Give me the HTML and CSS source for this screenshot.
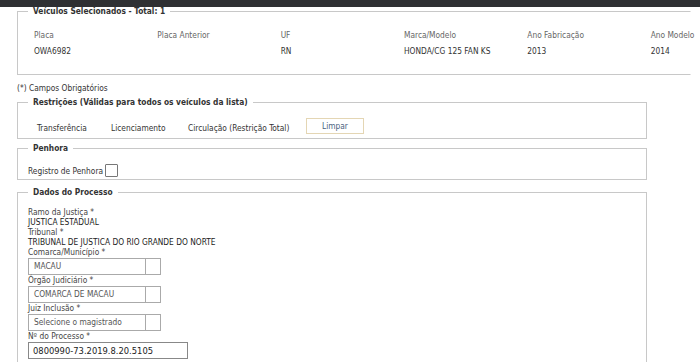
FILE: index.html
```html
<!DOCTYPE html>
<html lang="pt-BR">
<head>
  <meta charset="UTF-8" />
  <title>Restrição de Veículos</title>
  <link rel="stylesheet" href="styles.css">
</head>
<body>

  <div class="topbar"></div>

  <div class="page">
    <fieldset class="box box-wide">
      <legend>Veículos Selecionados - Total: 1</legend>
      <table class="veiculos">
        <tr class="head">
          <td>Placa</td>
          <td>Placa Anterior</td>
          <td>UF</td>
          <td>Marca/Modelo</td>
          <td>Ano Fabricação</td>
          <td>Ano Modelo</td>
        </tr>
        <tr>
          <td>OWA6982</td>
          <td></td>
          <td>RN</td>
          <td>HONDA/CG 125 FAN KS</td>
          <td>2013</td>
          <td>2014</td>
        </tr>
      </table>
    </fieldset>

    <p class="obrig">(*) Campos Obrigatórios</p>

    <fieldset class="box box-restr">
      <legend>Restrições (Válidas para todos os veículos da lista)</legend>
      <div class="restricoes">
        <span class="r1">Transferência</span>
        <span class="r2">Licenciamento</span>
        <span class="r3">Circulação (Restrição Total)</span>
        <button type="button" class="limpar">Limpar</button>
      </div>
    </fieldset>

    <fieldset class="box box-penhora">
      <legend>Penhora</legend>
      <label class="check">Registro de Penhora <span class="checkbox"></span></label>
    </fieldset>

    <fieldset class="box box-processo">
      <legend>Dados do Processo</legend>
      <div class="campos">
        <div class="lbl">Ramo da Justiça *</div>
        <div class="val">JUSTICA ESTADUAL</div>
        <div class="lbl">Tribunal *</div>
        <div class="val">TRIBUNAL DE JUSTICA DO RIO GRANDE DO NORTE</div>

        <div class="lbl">Comarca/Município *</div>
        <div class="combo"><span class="combo-text">MACAU</span><span class="combo-btn"></span></div>

        <div class="lbl">Órgão Judiciário *</div>
        <div class="combo"><span class="combo-text">COMARCA DE MACAU</span><span class="combo-btn"></span></div>

        <div class="lbl">Juiz Inclusão *</div>
        <div class="combo"><span class="combo-text">Selecione o magistrado</span><span class="combo-btn"></span></div>

        <div class="lbl">Nº do Processo *</div>
        <div class="texto">0800990-73.2019.8.20.5105</div>
      </div>
    </fieldset>
  </div>

</body>
</html>
```

FILE: styles.css
```css
body {
  margin: 0;
  font-family: "DejaVu Sans Condensed", "DejaVu Sans", Verdana, sans-serif;
  font-size: 8.3px;
  color: #333;
  background: #fff;
  overflow: hidden;
}

.topbar {
  height: 7px;
  background: #2f3033;
}

.page {
  padding-left: 17px;
  width: 630px;
}

.box {
  margin: 0;
  border: 1px solid #c8c8c8;
  padding: 0 10px;
  min-width: 0;
}

.box legend {
  margin-left: 0;
  padding: 0 5px;
  font-weight: bold;
  color: #333;
  line-height: 10px;
}

.box-wide {
  width: 652px;
  margin-top: -1px;
  padding-bottom: 15px;
  border-right-color: transparent;
}

.veiculos {
  border-collapse: collapse;
  margin: 11px 0 0 6px;
  width: 740px;
}

.veiculos td {
  width: 123px;
  padding: 0;
  height: 16px;
  white-space: nowrap;
}

.veiculos .head td {
  color: #666;
}

.obrig {
  margin: 8px 0 0 0;
  line-height: 10px;
}

.box-restr {
  margin-top: 4px;
  padding-bottom: 4px;
}

.restricoes {
  display: flex;
  align-items: flex-end;
  padding: 11px 0 0 9px;
}

.restricoes span {
  line-height: 12px;
}

.restricoes .r1 { width: 74px; }
.restricoes .r2 { width: 77px; }
.restricoes .r3 { width: 118px; }

.limpar {
  font-family: inherit;
  font-size: 8.3px;
  color: #4a5f80;
  background: #fff;
  border: 1px solid #e4d6b4;
  width: 58px;
  height: 16px;
  padding: 0;
}

.box-penhora {
  margin-top: 4px;
  padding-bottom: 2px;
}

.check {
  display: flex;
  align-items: center;
  gap: 2px;
  margin-top: 11px;
}

.checkbox {
  display: inline-block;
  width: 11px;
  height: 11px;
  border: 1px solid #777;
  border-radius: 1px;
}

.box-processo {
  margin-top: 7px;
  height: 200px;
}

.campos {
  padding-top: 10px;
}

.lbl,
.val {
  line-height: 10px;
}

.lbl {
  color: #444;
}

.val {
  color: #222;
}

.combo {
  display: flex;
  width: 133px;
  height: 17px;
  margin-top: 1px;
}

.combo-text {
  flex: 1;
  border: 1px solid #aaa;
  padding: 0 5px;
  line-height: 15px;
  color: #555;
}

.combo-btn {
  width: 14px;
  border: 1px solid #aaa;
  border-left: none;
}

.texto {
  width: 150px;
  height: 15px;
  border: 1px solid #888;
  padding: 0 4px;
  margin-top: 1px;
  line-height: 15px;
  font-size: 9.3px;
  color: #222;
}
```
